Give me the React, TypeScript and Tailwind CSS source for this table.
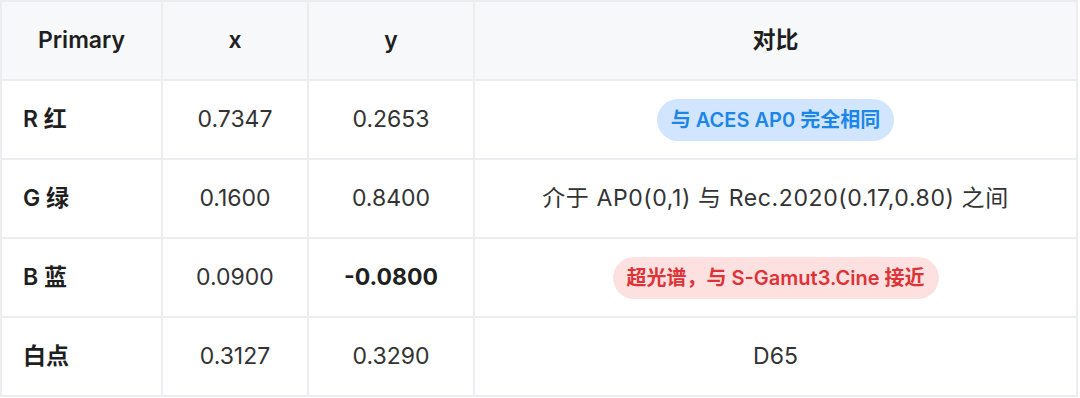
const rows = [
  { name: "R 红", x: "0.7347", y: "0.2653", yBold: false, note: "blue" },
  { name: "G 绿", x: "0.1600", y: "0.8400", yBold: false, note: "text" },
  { name: "B 蓝", x: "0.0900", y: "-0.0800", yBold: true, note: "red" },
  { name: "白点", x: "0.3127", y: "0.3290", yBold: false, note: "d65" },
];

function Note({ kind }: { kind: string }) {
  if (kind === "blue")
    return (
      <span className="inline-block rounded-full bg-[#d2e5fe] px-[14px] py-[6px] text-[20px] font-semibold text-[#1a86e8]">
        与 ACES AP0 完全相同
      </span>
    );
  if (kind === "red")
    return (
      <span className="inline-block rounded-full bg-[#fde1e1] px-[14px] py-[6px] text-[20px] font-semibold text-[#de3336]">
        超光谱，与 S-Gamut3.Cine 接近
      </span>
    );
  if (kind === "text") return <span className="tracking-[0.6px]">介于 AP0(0,1) 与 Rec.2020(0.17,0.80) 之间</span>;
  return <span>D65</span>;
}

export default function App() {
  return (
    <div className="w-[1080px] h-[398px] bg-white font-['Inter','Noto_Sans_CJK_SC',sans-serif] text-[23px] text-[#333]">
      <table className="w-[1078px] table-fixed border-collapse border-2 border-[#ebedf0]">
        <colgroup>
          <col className="w-[161px]" />
          <col className="w-[146px]" />
          <col className="w-[166px]" />
          <col />
        </colgroup>
        <thead>
          <tr className="h-[79px] bg-[#f7f8fa] text-[#1f1f1f]">
            <th className="border-2 border-[#ebedf0] font-semibold">Primary</th>
            <th className="border-2 border-[#ebedf0] font-semibold">x</th>
            <th className="border-2 border-[#ebedf0] font-semibold">y</th>
            <th className="border-2 border-[#ebedf0] font-semibold">对比</th>
          </tr>
        </thead>
        <tbody>
          {rows.map((r) => (
            <tr key={r.name} className="h-[79px]">
              <td className="border-2 border-[#ebedf0] pl-[21px] font-semibold text-[#1f1f1f]">{r.name}</td>
              <td className="border-2 border-[#ebedf0] text-center">{r.x}</td>
              <td className={`border-2 border-[#ebedf0] text-center ${r.yBold ? "font-bold text-[#1f1f1f]" : ""}`}>{r.y}</td>
              <td className="border-2 border-[#ebedf0] text-center">
                <Note kind={r.note} />
              </td>
            </tr>
          ))}
        </tbody>
      </table>
    </div>
  );
}
